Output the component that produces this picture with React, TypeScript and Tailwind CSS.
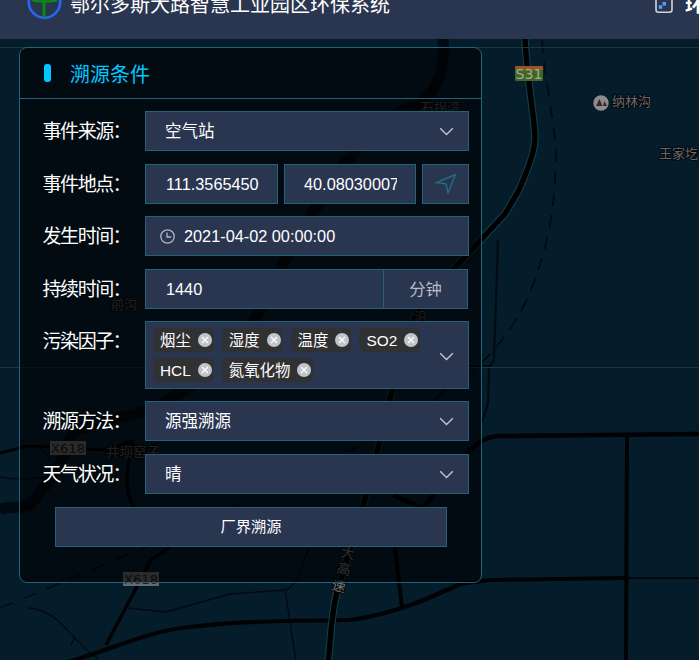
import type { ReactNode } from "react";

const CJK = "font-['Liberation_Sans','Noto_Sans_CJK_SC',sans-serif]";
const BOX = "border border-[#216478] bg-[#2a3550]";

function Chevron() {
  return (
    <svg className="h-[9px] w-[15px] shrink-0" viewBox="0 0 15 9" fill="none" stroke="#c0c4cc" strokeWidth="1.4">
      <path d="M1.2 1.2 7.5 7.5 13.8 1.2" />
    </svg>
  );
}

function Row({ label, gap, children }: { label: string; gap: string; children: ReactNode }) {
  return (
    <div className={`flex items-start ${gap}`}>
      <div className="-ml-[0.5px] flex h-10 w-[102.5px] shrink-0 whitespace-nowrap text-[19px] leading-[41px] tracking-[-1.4px]">
        <span className="w-[71px]">{label}</span>
        <span className="-ml-px">：</span>
      </div>
      {children}
    </div>
  );
}

function Select({ value }: { value: string }) {
  return (
    <div className={`flex h-10 w-[324px] items-center justify-between pl-[19px] pr-[14px] text-[16.5px] ${BOX}`}>
      <span>{value}</span>
      <Chevron />
    </div>
  );
}

function Tag({ name }: { name: string }) {
  return (
    <div className="flex h-6 items-center gap-[7px] rounded-[5px] bg-[#303133] pl-[7px] pr-[2px] text-[15.4px] leading-6">
      <span className="pt-px">{name}</span>
      <svg className="size-[14px]" viewBox="0 0 14 14">
        <circle cx="7" cy="7" r="7" fill="#c0c4cc" />
        <path d="m4 4 6 6m0-6-6 6" stroke="#fff" strokeWidth="1.2" />
      </svg>
    </div>
  );
}

function MapCanvas() {
  const highway = "M525 38C526 70 534 115 535 136C535 150 530 164 519 190L505 214L420 305C404 340 392 390 379 444L362 510L337 592C330 620 331 642 328 662";
  return (
    <svg className="absolute inset-0 h-[660px] w-[699px]" viewBox="0 0 699 660" fill="none">
      <rect width="699" height="660" fill="#051c2b" />
      <g stroke="#020a11" strokeLinejoin="round">
        <path d="M443 38C445 75 438 88 418 105C385 112 365 142 344 164C320 200 290 250 270 290C245 350 200 385 150 410L75 430C65 440 70 455 50 480L30 505C20 508 10 507 0 509" strokeWidth="11" />
        <path d="M498 240 494 360 489 368 488 404 482 422" strokeWidth="2" />
        <path d="M469 366H492" strokeWidth="2" />
        <path d="M542 40C545 85 555 118 556 160C554 215 548 244 533 285C518 325 490 358 470 372" strokeDasharray="13 9" strokeWidth="1.6" />
        <path d="M0 608 70 579 140 550 240 503" strokeDasharray="14 11" strokeWidth="1.5" />
        <path d="M28 608C60 610 65 635 98 659M75 636l-4 9M128 608l38 4 64-18 56-4C305 580 300 562 309 548M285 589l11 72M40 447c2 7 10 9 10 14M0 477c18 4 38 1 46 0M346 452l14-6M432 402l22-20" strokeWidth="1.4" />
      </g>
      <g stroke="#000204" strokeLinejoin="round">
        <path d="M0 453 28 446 106 450 132 441C130 460 127 470 127 480C128 495 130 504 136 508" strokeWidth="3" />
        <path d="M170 547 151 560 106 645" strokeWidth="3.5" />
        <path d="M68 662C105 652 150 630 190 627C240 621 280 621 350 620C395 614 430 598 460 584L490 580 626 578" strokeWidth="4.2" />
        <path d="M626 578H699" strokeWidth="1.3" />
        <path d="M393 495 423 508 470 450C480 440 490 436 500 436L699 434" strokeWidth="4.5" />
        <path d="M627 434 626 660" strokeWidth="4" />
        <path d="M394 540 402 607" strokeWidth="4" />
      </g>
      <path d={highway} stroke="#123d49" strokeWidth="7.600" />
      <path d={highway} stroke="#000" strokeWidth="5.400" />
      <path d="M0 47.5H699M0 367.5H699" stroke="#1d3640" />
      <g className={CJK} fontSize="13" fill="#55504e" stroke="#03090e" strokeWidth="2" paintOrder="stroke">
        <text x="421" y="112">石拐湾</text>
        <text x="612" y="106" fill="#6b6764">纳林沟</text>
        <text x="659" y="158" fill="#6b6764">王家圪</text>
        <text x="111" y="309">前沟</text>
        <text x="106" y="457" fontSize="13.5">井坝窑子</text>
        <text x="414" y="321">沿</text>
        <g fill="#77736f" fontSize="14">
          <text x="341" y="558" transform="rotate(12 348 553)">大</text>
          <text x="337" y="574" transform="rotate(12 344 569)">高</text>
          <text x="332" y="591" transform="rotate(12 339 586)">速</text>
        </g>
      </g>
      <circle cx="601" cy="103" r="7.7" fill="#8d8b8b" />
      <path d="m596 106 3.5-7 3 7zm7 0 1.5-5 2.5 5z" fill="#36292a" />
      <rect x="515" y="66" width="28" height="15" rx="1.5" fill="#3d6824" />
      <path d="M515 70v-3q0-1 1-1h26q1 0 1 1v3z" fill="#985427" />
      <text x="515.500" y="79" className="font-['DejaVu_Sans',sans-serif]" fontSize="13.5" fill="#aaa999" textLength="27" lengthAdjust="spacingAndGlyphs">S31</text>
      <g className="font-['DejaVu_Sans',sans-serif]" fontSize="13">
        <rect x="50" y="441" width="36" height="14" fill="#69696a" />
        <text x="51" y="453" fill="#1e1e1e" textLength="34">X618</text>
        <rect x="123" y="572" width="36" height="14" fill="#69696a" />
        <text x="124" y="584" fill="#1e1e1e" textLength="34">X618</text>
      </g>
    </svg>
  );
}

export default function App() {
  return (
    <div className={`relative h-[660px] w-[699px] overflow-hidden text-white ${CJK}`}>
      <MapCanvas />
      <header className="relative flex h-[39px] w-[710px] items-start bg-[#2a3550]">
        <svg className="ml-[27px] h-5 w-[36px] shrink-0" viewBox="0 0 36 20" fill="none">
          <circle cx="17.5" cy="2" r="15.7" stroke="#2867f5" strokeWidth="2.6" />
          <path d="M17 0v17.5" stroke="#078c12" strokeWidth="3" />
          <path d="M5 0c4 2 21 2 25 0" stroke="#078c12" strokeWidth="2.5" />
        </svg>
        <h1 className="-mt-[10px] ml-[7px] w-[585px] shrink-0 whitespace-nowrap text-[20px] leading-[30px]">鄂尔多斯大路智慧工业园区环保系统</h1>
        <svg className="h-[14px] w-[19px] shrink-0" viewBox="0 0 19 14" fill="none">
          <rect x="1" y="-4" width="16" height="16.3" rx="2.5" stroke="#d2d4da" strokeWidth="1.6" />
          <path d="M7.500 2h3.500v3.500H7.500zM3.700 5.300h3.500v3.500H3.700z" fill="#5a98ff" />
        </svg>
        <span className="-mt-[10px] ml-[11px] shrink-0 whitespace-nowrap text-[20px] font-bold leading-[30px]">环</span>
      </header>
      <section className="relative ml-[19px] mt-2 h-[536px] w-[463px] rounded-lg border border-[#216478] bg-black/60">
        <h2 className="flex h-[51px] items-center border-b border-[#216478] pl-6 text-[20px] text-[#00c8ff]">
          <span className="mr-[19px] h-[18px] w-[7px] rounded-[3px] bg-[#00c8ff]" />
          <span className="pt-[3px]">溯源条件</span>
        </h2>
        <div className="pl-[23px] pt-3">
          <Row label="事件来源" gap="mb-[13px]"><Select value="空气站" /></Row>
          <Row label="事件地点" gap="mb-3">
            <div className="flex gap-[6px] text-[16.3px]">
              <div className={`flex h-10 w-[133px] items-center pl-5 ${BOX}`}>111.3565450</div>
              <div className={`flex h-10 w-[132px] items-center pl-[19px] ${BOX}`}>
                <span className="w-[93px] overflow-hidden">40.08030007</span>
              </div>
              <div className={`flex h-10 w-[47px] items-center justify-center ${BOX}`}>
                <svg className="size-[22px]" viewBox="0 0 22 22" fill="none" stroke="#216f84" strokeWidth="1.4">
                  <path d="M20.500 1.500 1.500 9.700 11 10.800 13 20z" />
                </svg>
              </div>
            </div>
          </Row>
          <Row label="发生时间" gap="mb-[13px]">
            <div className={`flex h-10 w-[324px] items-center gap-[9px] pl-[14px] text-[16.3px] ${BOX}`}>
              <svg className="size-[15px]" viewBox="0 0 15 15" fill="none" stroke="#b0b5c1" strokeWidth="1.3">
                <circle cx="7.5" cy="7.5" r="6.700" />
                <path d="M7 3.500v4.500h4.200" />
              </svg>
              <span>2021-04-02 00:00:00</span>
            </div>
          </Row>
          <Row label="持续时间" gap="mb-3">
            <div className={`flex h-10 w-[323px] text-[16.3px] leading-[38px] ${BOX}`}>
              <span className="w-[238px] border-r border-[#216478] pl-5">1440</span>
              <span className="flex-1 text-center text-[#b9bcc5]">分钟</span>
            </div>
          </Row>
          <Row label="污染因子" gap="mb-3">
            <div className={`flex h-[68px] w-[324px] items-center justify-between pl-[7px] pr-[14px] ${BOX}`}>
              <div className="flex w-[280px] flex-wrap gap-x-[8px] gap-y-[6px]">
                <Tag name="烟尘" />
                <Tag name="湿度" />
                <Tag name="温度" />
                <Tag name="SO2" />
                <Tag name="HCL" />
                <Tag name="氮氧化物" />
              </div>
              <div className="flex pt-[3px]"><Chevron /></div>
            </div>
          </Row>
          <Row label="溯源方法" gap="mb-[13px]"><Select value="源强溯源" /></Row>
          <Row label="天气状况" gap="mb-[13px]"><Select value="晴" /></Row>
          <button className={`ml-3 flex h-10 w-[392px] items-center justify-center text-[15.300px] ${BOX}`}>厂界溯源</button>
        </div>
      </section>
    </div>
  );
}
